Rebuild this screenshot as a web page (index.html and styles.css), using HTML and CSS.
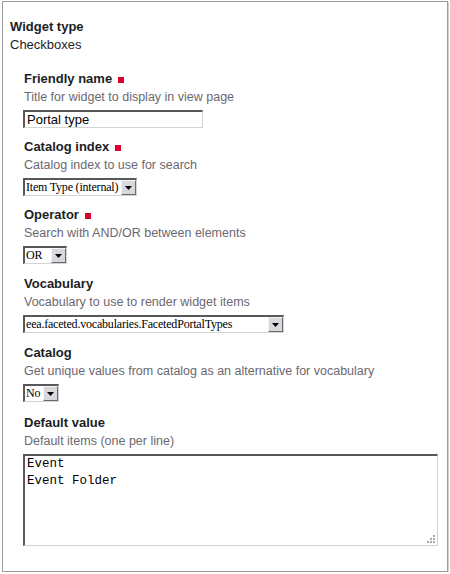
FILE: index.html
```html
<!DOCTYPE html>
<html lang="en">
	<head>
	<meta charset="UTF-8" />
	<title>Edit widget</title>
	<link rel="stylesheet" href="styles.css">
	</head>
	<body>
		<div class="widget-box">
			<div class="type-row">
				<div class="type-label">Widget type</div>
				<div>Checkboxes</div>
			</div>
			<div class="field first">
				<div class="field-label">Friendly name <span class="required"></span></div>
				<div class="field-help">Title for widget to display in view page</div>
				<input class="text-input" type="text" value="Portal type">
			</div>
			<div class="field">
				<div class="field-label">Catalog index <span class="required"></span></div>
				<div class="field-help">Catalog index to use for search</div>
				<div class="select w-index">
					<span class="select-text">Item Type (internal)</span>
					<span class="select-btn"><svg width="7" height="4" viewBox="0 0 7 4"><path d="M0 0h7L3.5 4z" fill="#000"/></svg></span>
				</div>
			</div>
			<div class="field">
				<div class="field-label">Operator <span class="required"></span></div>
				<div class="field-help">Search with AND/OR between elements</div>
				<div class="select w-operator">
					<span class="select-text">OR</span>
					<span class="select-btn"><svg width="7" height="4" viewBox="0 0 7 4"><path d="M0 0h7L3.5 4z" fill="#000"/></svg></span>
				</div>
			</div>
			<div class="field spaced">
				<div class="field-label">Vocabulary</div>
				<div class="field-help">Vocabulary to use to render widget items</div>
				<div class="select w-vocab">
					<span class="select-text">eea.faceted.vocabularies.FacetedPortalTypes</span>
					<span class="select-btn"><svg width="7" height="4" viewBox="0 0 7 4"><path d="M0 0h7L3.5 4z" fill="#000"/></svg></span>
				</div>
			</div>
			<div class="field spaced">
				<div class="field-label">Catalog</div>
				<div class="field-help">Get unique values from catalog as an alternative for vocabulary</div>
				<div class="select w-catalog">
					<span class="select-text">No</span>
					<span class="select-btn"><svg width="7" height="4" viewBox="0 0 7 4"><path d="M0 0h7L3.5 4z" fill="#000"/></svg></span>
				</div>
			</div>
			<div class="field last">
				<div class="field-label">Default value</div>
				<div class="field-help">Default items (one per line)</div>
				<div class="area-wrap">
					<textarea class="text-area">Event
Event Folder</textarea>
					<svg class="grip" width="9" height="9" viewBox="0 0 9 9">
						<rect x="7" y="1" width="2" height="2" fill="#a8a8a8"/>
						<rect x="4" y="4" width="2" height="2" fill="#a8a8a8"/>
						<rect x="7" y="4" width="2" height="2" fill="#a8a8a8"/>
						<rect x="1" y="7" width="2" height="2" fill="#a8a8a8"/>
						<rect x="4" y="7" width="2" height="2" fill="#a8a8a8"/>
						<rect x="7" y="7" width="2" height="2" fill="#a8a8a8"/>
					</svg>
				</div>
			</div>
		</div>
	</body>
</html>
```

FILE: styles.css
```css
* { box-sizing: border-box; }
html { font-family: "Liberation Sans", Arial, sans-serif; font-size: 13px; }
body { margin: 0; background-color: #fff; color: #1d1d24; }
.widget-box { margin: 1px 0 0 2px; width: 446px; border: 1px solid #9c9c9c; box-shadow: 1px 1px 0 #d0d0d0; padding: 16px 7px 25px 7px; }
.type-row { line-height: 18px; }
.type-label { font-weight: bold; }
.field { margin: 10px 0 0 13px; }
.field.first { margin-top: 16px; }
.field.spaced { margin-top: 11px; }
.field.last { margin-top: 12px; }
.field-label { font-weight: bold; line-height: 18px; padding-left: 1px; }
.required { display: inline-block; width: 6px; height: 6px; background: #dc0030; margin-left: 2px; vertical-align: 0; }
.field-help { font-size: 12.5px; line-height: 19px; color: #6c6870; padding-left: 1px; margin-bottom: 3px; }
.text-input { display: block; width: 180px; height: 18px; margin: 0; padding: 0 2px; font: 13px "Liberation Sans", Arial, sans-serif; color: #000; border-style: solid; border-width: 2px 1px 1px 2px; border-color: #585858 #d4d4d4 #d4d4d4 #585858; outline: none; }
.select { display: flex; align-items: center; height: 18px; border-style: solid; border-width: 2px 1px 1px 2px; border-color: #585858 #d4d4d4 #d4d4d4 #585858; background: #fff; }
.select-text { flex: 1; font: 12px "Liberation Serif", "Times New Roman", serif; letter-spacing: -0.2px; color: #000; padding-left: 1px; white-space: nowrap; overflow: hidden; }
.select-btn { display: flex; justify-content: center; align-items: center; width: 15px; height: 15px; background: #d9d8dc; border-style: solid; border-width: 1px; border-color: #f4f4f4 #6a6a6a #6a6a6a #f4f4f4; }
.w-index { width: 114px; }
.w-operator { width: 44px; }
.w-vocab { width: 261px; }
.w-catalog { width: 36px; }
.area-wrap { position: relative; width: 415px; }
.text-area { display: block; width: 415px; height: 92px; margin: 0; padding: 0 2px; resize: none; font: 12.5px "Liberation Mono", "Courier New", monospace; line-height: 17px; color: #000; border-style: solid; border-width: 2px 1px 1px 2px; border-color: #585858 #d4d4d4 #d4d4d4 #585858; outline: none; }
.grip { position: absolute; right: 3px; bottom: 3px; }
```
